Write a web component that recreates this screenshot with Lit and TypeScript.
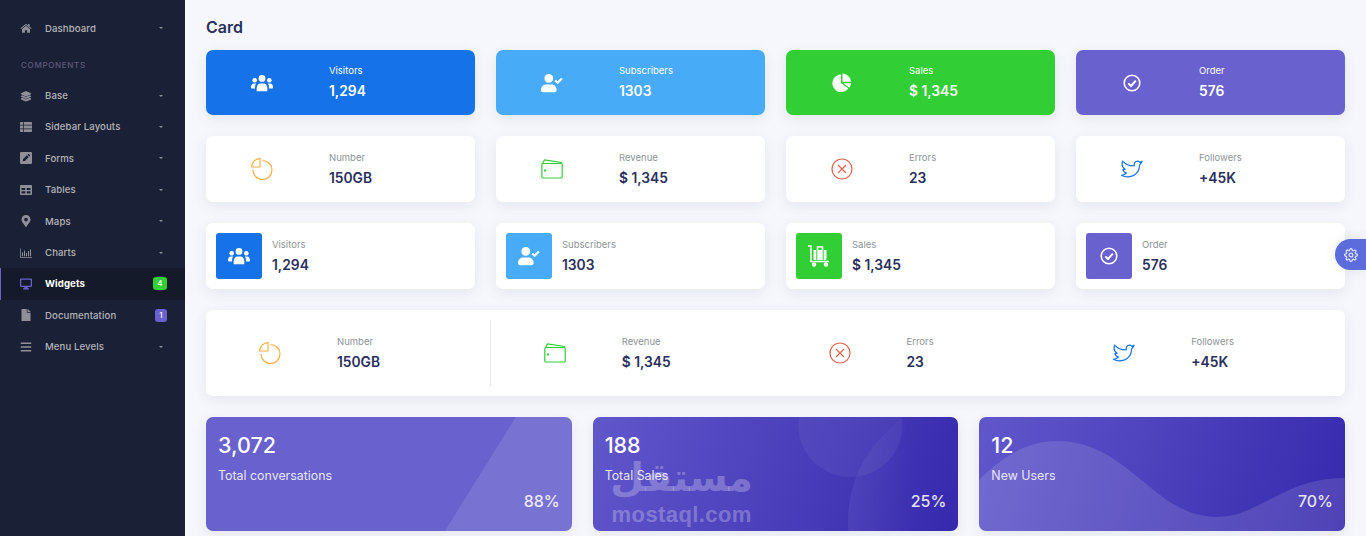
import { LitElement, html, css, svg } from "lit";
import { customElement } from "lit/decorators.js";

const P = {
  home: svg`<svg viewBox="0 0 24 20"><path d="M12 1.5 0.8 10.6l1.2 1.5L12 4l10 8.1 1.2-1.5-4-3.2V2.2h-3v2.8z"/><path d="M12 5.6 4 12.1V19.4h5.8v-5h4.4v5H20v-7.3z"/></svg>`,
  layers: svg`<svg viewBox="0 0 24 22"><path d="M12 1 2 5.6c-.8.4-.8 1.4 0 1.8L12 12l10-4.6c.8-.4.8-1.4 0-1.8z"/><path d="M4.8 9.5 2 10.8c-.8.4-.8 1.4 0 1.8l10 4.6 10-4.6c.8-.4.8-1.4 0-1.8l-2.8-1.3L12 12.8z"/><path d="M4.8 14.7 2 16c-.8.4-.8 1.4 0 1.8L12 22l10-4.2c.8-.4.8-1.4 0-1.8l-2.8-1.3L12 18z"/></svg>`,
  list: svg`<svg viewBox="0 0 24 20"><path d="M0 1.5C0 .7.7 0 1.5 0H6v5.6H0zM7.5 0h15c.8 0 1.5.7 1.5 1.5v4.1H7.5zM0 7.2h6v5.6H0zM7.5 7.2H24v5.6H7.5zM0 14.4h6V20H1.500C.7 20 0 19.300 0 18.500zM7.500 14.400H24v4.100c0 .8-.7 1.500-1.500 1.500h-15z"/></svg>`,
  pen: svg`<svg viewBox="0 0 20 20"><path fill-rule="evenodd" d="M2 0h16a2 2 0 0 1 2 2v16a2 2 0 0 1-2 2H2a2 2 0 0 1-2-2V2a2 2 0 0 1 2-2zm9.500 5.500-6.300 6.300L4.500 15.500l3.700-.7 6.300-6.300zm1-1 3 3 1-1a1 1 0 0 0 0-1.400l-1.600-1.600a1 1 0 0 0-1.400 0z"/></svg>`,
  table: svg`<svg viewBox="0 0 24 20"><path fill-rule="evenodd" d="M2 0h20a2 2 0 0 1 2 2v16a2 2 0 0 1-2 2H2a2 2 0 0 1-2-2V2a2 2 0 0 1 2-2zm1 6v4h7.500V6zm10.500 0v4H21V6zM3 12.500V17h7.500v-4.500zm10.500 0V17H21v-4.500z"/></svg>`,
  marker: svg`<svg viewBox="0 0 384 512"><path d="M172.268 501.67C26.97 291.031 0 269.413 0 192 0 85.961 85.961 0 192 0s192 85.961 192 192c0 77.413-26.97 99.031-172.268 309.67-9.535 13.774-29.93 13.773-39.464 0zM192 272c44.183 0 80-35.817 80-80s-35.817-80-80-80-80 35.817-80 80 35.817 80 80 80z"/></svg>`,
  chart: svg`<svg viewBox="0 0 24 20"><path d="M0 1h1.500v16.800H24V19.500H0z"/><path d="M4 9h2v7.500H4zM8 5h2v11.500H8zM12 10h2v6.500h-2zM16 6h2v10.500h-2zM20 3h2v13.500h-2z"/></svg>`,
  desktop: svg`<svg viewBox="0 0 24 22"><path fill-rule="evenodd" d="M2 0h20a2 2 0 0 1 2 2v13a2 2 0 0 1-2 2h-7l.6 2.500H18V22H6v-2.500h2.400L9 17H2a2 2 0 0 1-2-2V2a2 2 0 0 1 2-2zm.5 2.500v12h19v-12z"/></svg>`,
  file: svg`<svg viewBox="0 0 384 512"><path d="M224 136V0H24C10.700 0 0 10.700 0 24v464c0 13.300 10.700 24 24 24h336c13.300 0 24-10.700 24-24V160H248c-13.200 0-24-10.800-24-24zm160-14.100v6.100H256V0h6.100c6.400 0 12.500 2.500 17 7l97.900 98c4.500 4.500 7 10.600 7 16.900z"/></svg>`,
  bars: svg`<svg viewBox="0 0 448 512"><path d="M16 132h416c8.837 0 16-7.163 16-16V76c0-8.837-7.163-16-16-16H16C7.163 60 0 67.163 0 76v40c0 8.837 7.163 16 16 16zm0 160h416c8.837 0 16-7.163 16-16v-40c0-8.837-7.163-16-16-16H16c-8.837 0-16 7.163-16 16v40c0 8.837 7.163 16 16 16zm0 160h416c8.837 0 16-7.163 16-16v-40c0-8.837-7.163-16-16-16H16c-8.837 0-16 7.163-16 16v40c0 8.837 7.163 16 16 16z"/></svg>`,
  users: svg`<svg viewBox="0 0 24 18"><circle cx="12" cy="4" r="3.700"/><circle cx="4" cy="6" r="2.500"/><circle cx="20" cy="6" r="2.500"/><path d="M6.200 18v-3.500c0-3 2-5 4-5h3.600c2 0 4 2 4 5V18z"/><path d="M0 13.500c0-2.500 1.300-4 3-4h2.600a6 6 0 0 0-1.200 4V15H1a1 1 0 0 1-1-1zM24 13.500c0-2.500-1.300-4-3-4h-2.600a6 6 0 0 1 1.200 4V15H23a1 1 0 0 0 1-1z"/></svg>`,
  usercheck: svg`<svg viewBox="0 0 24 20"><circle cx="8.500" cy="5" r="4.800"/><path d="M0 17.500c0-3.600 2.500-6 5.500-6h6c3 0 5.500 2.400 5.500 6v.5a2 2 0 0 1-2 2H2a2 2 0 0 1-2-2z"/><path d="m14.700 8 1.600-1.600 1.800 1.800 3.900-3.900 1.600 1.600-5.500 5.500z"/></svg>`,
  pie: svg`<svg viewBox="0 0 22 22"><path d="M10 2.500A8.800 8.800 0 1 0 17.300 16.500L10 11z"/><path d="M11.500 1.500V9.700H20A8.800 8.800 0 0 0 11.500 1.500z"/><path d="M12.500 11.200H20.200A8.500 8.500 0 0 1 18.200 15.700z"/></svg>`,
  check: svg`<svg viewBox="0 0 22 22" fill="none" stroke="currentColor"><circle cx="11" cy="11" r="7.800" stroke-width="1.600"/><path d="m7.300 11.300 2.700 2.700 4.800-5.400" stroke-width="1.900"/></svg>`,
  pieo: svg`<svg viewBox="0 0 22 22" fill="none" stroke="currentColor" stroke-width="1.200"><path d="M11.500 2.500A9.500 9.500 0 1 1 2 12"/><path d="M9 .6V9H.6A8.400 8.400 0 0 1 9 .6z"/></svg>`,
  wallet: svg`<svg viewBox="0 0 22 20" fill="none" stroke="currentColor" stroke-width="1.200"><rect x=".8" y="4.500" width="20.400" height="14.500" rx="1"/><path d="M1.500 4.500 3.500 1 20.500 3.500v1"/><path d="M3 11.500h2" stroke-width="1.800"/></svg>`,
  xc: svg`<svg viewBox="0 0 22 22" fill="none" stroke="currentColor" stroke-width="1.200"><circle cx="11" cy="11" r="10"/><path d="m7 7 8 8M15 7l-8 8"/></svg>`,
  bird: svg`<svg viewBox="0 0 24 20" fill="none" stroke="currentColor" stroke-width="1.300" stroke-linejoin="round"><path d="M23 1.500c-.8.6-1.700 1-2.500 1.200a3.500 3.500 0 0 0-6.100 2.800v1C10.500 6.600 5 5 1.800 1.300c0 0-2.500 6 2.800 9-1.200.6-1.600.6-2.600.4.400 2 2 3.200 4 3.700-1.500 1.500-3.700 2.500-5.500 2.500 6 3.500 19.500 2 19.900-11.500.6-.7 2.100-2.400 2.600-3.900z"/></svg>`,
  cart: svg`<svg viewBox="0 0 22 22" fill="none" stroke="currentColor" stroke-width="1.500"><path d="M0 1h3v15.500h18"/><circle cx="6" cy="19.500" r="1.500" fill="currentColor"/><circle cx="18" cy="19.500" r="1.500" fill="currentColor"/><path fill="currentColor" stroke="none" d="M5.500 5h2.800v10H6.500a1 1 0 0 1-1-1zM18.500 5h-2.800v10h1.800a1 1 0 0 0 1-1zM9.300 5H14.700V15H9.300z"/><path d="M9.500 5V2h5v3"/></svg>`,
  gear: svg`<svg viewBox="0 0 24 24" fill="none" stroke="currentColor" stroke-width="2.100" stroke-linejoin="round"><circle cx="12" cy="12" r="3.300"/><path d="M19.400 15a1.700 1.700 0 0 0 .3 1.800l.1.100a2 2 0 1 1-2.900 2.900l-.1-.1a1.700 1.700 0 0 0-2.800 1.200V21a2 2 0 1 1-4 0v-.1a1.700 1.700 0 0 0-2.900-1.200l-.1.100a2 2 0 1 1-2.800-2.900l.1-.1a1.700 1.700 0 0 0-1.200-2.800H3a2 2 0 1 1 0-4h.1a1.700 1.700 0 0 0 1.200-2.900l-.1-.1a2 2 0 1 1 2.900-2.800l.1.100a1.700 1.700 0 0 0 1.800.3h.1A1.700 1.700 0 0 0 10 3.100V3a2 2 0 1 1 4 0v.1a1.700 1.700 0 0 0 2.900 1.200l.1-.1a2 2 0 1 1 2.800 2.900l-.1.100a1.700 1.700 0 0 0-.3 1.800v.1a1.700 1.700 0 0 0 1.500 1h.1a2 2 0 1 1 0 4H21a1.700 1.700 0 0 0-1.600 1z"/></svg>`,
};
type K = keyof typeof P;

const nav: { i: K; t: string; badge?: string; c?: string; active?: boolean }[] = [
  { i: "layers", t: "Base" },
  { i: "list", t: "Sidebar Layouts" },
  { i: "pen", t: "Forms" },
  { i: "table", t: "Tables" },
  { i: "marker", t: "Maps" },
  { i: "chart", t: "Charts" },
  { i: "desktop", t: "Widgets", badge: "4", c: "green", active: true },
  { i: "file", t: "Documentation", badge: "1", c: "purple" },
  { i: "bars", t: "Menu Levels" },
];
const row1: [K, string, string, string][] = [
  ["users", "Visitors", "1,294", "blue"],
  ["usercheck", "Subscribers", "1303", "sky"],
  ["pie", "Sales", "$ 1,345", "green"],
  ["check", "Order", "576", "purple"],
];
const row2: [K, string, string, string][] = [
  ["pieo", "Number", "150GB", "orange"],
  ["wallet", "Revenue", "$ 1,345", "lime"],
  ["xc", "Errors", "23", "red"],
  ["bird", "Followers", "+45K", "tw"],
];
const row3: [K, string, string, string][] = [
  ["users", "Visitors", "1,294", "blue"],
  ["usercheck", "Subscribers", "1303", "sky"],
  ["cart", "Sales", "$ 1,345", "green"],
  ["check", "Order", "576", "purple"],
];

@customElement("app-root")
export class AppRoot extends LitElement {
  static styles = css`
    :host { display: block; width: 1366px; height: 536px; overflow: hidden; position: relative;
      font-family: Inter, "Liberation Sans", sans-serif; background: #f5f7fd; color: #2a2f5b; }
    * { box-sizing: border-box; }
    .page { display: flex; height: 536px; }
    .side { width: 185px; flex: none; background: #1a2035; padding-top: 12.500px; color: #b4b5bb; }
    .item { display: flex; align-items: center; height: 31.400px; padding-left: 20px; padding-right: 18px; font-size: 9.600px; font-weight: 500; letter-spacing: .1px; }
    .item .ic { width: 12px; height: 12px; display: flex; align-items: center; justify-content: center; fill: #8f9097; color: #8f9097; flex: none; }
    .item .ic svg { width: 100%; height: 100%; max-height: 12px; }
    .item .t { margin-left: 13px; flex: 1; }
    .caret { width: 0; height: 0; border-left: 2px solid transparent; border-right: 2px solid transparent; border-top: 2px solid #8f9097; margin-right: 4px; }
    .item.active { background: #151a2b; border-left: 1px solid #6861ce; padding-left: 19px; color: #fff; font-weight: 700; }
    .item.active .ic { fill: #6861ce; color: #6861ce; }
    .badge { min-width: 12px; padding: 0 4px; height: 13px; border-radius: 3px; color: #fff; font-size: 8px; line-height: 13px; text-align: center; font-weight: 500; }
    .badge.green { background: #31ce36; min-width: 14px; }
    .badge.purple { background: #6861ce; }
    .sec { height: 30px; margin-top: 6px; display: flex; align-items: center; padding-left: 21px; font-size: 8px; letter-spacing: .7px; color: #5c5c78; font-weight: 500; }
    .main { flex: 1; padding: 18px 21px 0; min-width: 0; display: flex; flex-direction: column; }
    h1 { margin: 0; font-size: 16px; line-height: 19px; font-weight: 600; color: #2a2f5b; height: 32px; }
    .grid4 { display: grid; grid-template-columns: repeat(4, 1fr); gap: 21px; }
    .grid3 { display: grid; grid-template-columns: repeat(3, 1fr); gap: 21px; }
    .mb { margin-bottom: 21px; }
    .card { border-radius: 7px; background: #fff; box-shadow: 0 4px 14px rgba(69,65,78,.09); }
    .card.blue, .blue { background: #1572e8; } .card.sky, .sky { background: #48abf7; } .card.green, .green { background: #31ce36; } .card.purple, .purple { background: #6861ce; }
    .stat { display: grid; grid-template-columns: 112px 1fr; column-gap: 11px; align-items: center; height: 66px; }
    .top .stat { height: 65px; color: #fff; }
    .stat .ico { display: flex; justify-content: center; align-items: center; fill: currentColor; }
    .stat .ico svg { width: 22px; height: 22px; display: block; }
    .top .stat .ico { color: #fff; }
    .txt { padding-top: 1px; }
    .top .txt { padding-top: 0; }
    .lb { font-size: 9.500px; line-height: 12px; color: #8d9498; margin-bottom: 6px; }
    .top .lb { color: #fff; margin-bottom: 5.500px; }
    .val { font-size: 13.800px; line-height: 17px; font-weight: 600; color: #2a2f5b; }
    .top .val { color: #fff; }
    .c-orange { color: #ffad46; } .c-lime { color: #31ce36; } .c-red { color: #e0644d; } .c-tw { color: #1572e8; }
    .row3 .stat { display: flex; padding: 10px; height: 66px; gap: 10px; }
    .row3 .box { width: 46px; height: 46px; border-radius: 3px; display: flex; align-items: center; justify-content: center; color: #fff; fill: #fff; flex: none; }
    .row3 .box svg { width: 22px; height: 22px; }
    .wide { display: grid; grid-template-columns: repeat(4, 1fr); padding: 10px 0; height: 86px; }
    .wide .cell { padding-left: 8px; }
    .wide .cell:first-child { border-right: 1px solid #e4e6ee; }
    .big { position: relative; height: 114px; overflow: hidden; color: #fff; padding: 15px 12px 0 12px; border-radius: 7px; box-shadow: 0 4px 14px rgba(69,65,78,.09); }
    .big.g { background: linear-gradient(108deg, #6157cb, #3729ad); }
    .big.p { background: #6861ce; }
    .big svg.bg { position: absolute; inset: 0; width: 100%; height: 100%; }
    .big .num, .big .cap, .big .pct { position: relative; }
    .num { font-size: 21.500px; line-height: 26px; font-weight: 500; }
    .cap { font-size: 12.400px; line-height: 16px; margin-top: 10px; opacity: .85; }
    .pct { font-size: 16px; line-height: 19px; text-align: right; font-weight: 500; margin-top: 8px; opacity: .85; }
    .mark { position: absolute; left: 0; top: 36px; width: 178px; display: flex; flex-direction: column; align-items: center; color: rgba(255,255,255,.27); font-weight: 700; }
    .mark .ar { font-family: "DejaVu Sans", sans-serif; font-size: 39px; line-height: 50px; }
    .mark .en { font-family: "Liberation Sans", sans-serif; font-size: 22px; line-height: 24px; letter-spacing: .4px; }
    .cfg { position: absolute; right: 0; top: 239px; width: 31px; height: 31px; border-radius: 15.500px 0 0 15.500px; background: #5c6ddb; color: #dfe3fa; display: flex; align-items: center; justify-content: center; box-shadow: 0 0 12px rgba(69,65,78,.12); }
    .cfg svg { width: 14px; height: 14px; }
  `;

  private stat(s: [K, string, string, string]) {
    return html`<div class="stat">
      <div class="ico c-${s[3]}">${P[s[0]]}</div>
      <div class="txt"><div class="lb">${s[1]}</div><div class="val">${s[2]}</div></div>
    </div>`;
  }

  render() {
    return html`<div class="page">
      <aside class="side">
        <div class="item"><span class="ic">${P.home}</span><span class="t">Dashboard</span><span class="caret"></span></div>
        <div class="sec">COMPONENTS</div>
        ${nav.map((n) => html`<div class="item ${n.active ? "active" : ""}">
          <span class="ic">${P[n.i]}</span><span class="t">${n.t}</span>
          ${n.badge ? html`<span class="badge ${n.c}">${n.badge}</span>` : html`<span class="caret"></span>`}
        </div>`)}
      </aside>
      <main class="main">
        <h1>Card</h1>
        <div class="grid4 mb top">${row1.map((s) => html`<div class="card ${s[3]}">${this.stat(s)}</div>`)}</div>
        <div class="grid4 mb">${row2.map((s) => html`<div class="card">${this.stat(s)}</div>`)}</div>
        <div class="grid4 mb row3">${row3.map((s) => html`<div class="card"><div class="stat">
          <div class="box ${s[3]}">${P[s[0]]}</div>
          <div class="txt"><div class="lb">${s[1]}</div><div class="val">${s[2]}</div></div>
        </div></div>`)}</div>
        <div class="card wide mb">${row2.map((s) => html`<div class="cell">${this.stat(s)}</div>`)}</div>
        <div class="grid3">
          <div class="big p">
            <svg class="bg" viewBox="0 0 366 114" preserveAspectRatio="none"><path d="M310 0 239 114H366V0z" fill="#fff" fill-opacity=".11"/></svg>
            <div class="num">3,072</div><div class="cap">Total conversations</div><div class="pct">88%</div>
          </div>
          <div class="big g">
            <svg class="bg" viewBox="0 0 365 114" preserveAspectRatio="none">
              <defs><linearGradient id="lf" x1="0" x2="1" y1="0" y2="0"><stop offset="0" stop-color="#fff" stop-opacity=".06"/><stop offset=".6" stop-color="#fff" stop-opacity="0"/></linearGradient></defs>
              <circle cx="257" cy="8" r="52" fill="#fff" fill-opacity=".05"/>
              <path d="M310 0C268 32 252 72 255 114H365V0z" fill="url(#lf)"/>
            </svg>
            <div class="mark" aria-hidden="true"><span class="ar">مستقل</span><span class="en">mostaql.com</span></div>
            <div class="num">188</div><div class="cap">Total Sales</div><div class="pct">25%</div>
          </div>
          <div class="big g">
            <svg class="bg" viewBox="0 0 366 114" preserveAspectRatio="none"><path d="M0 63C25 38 50 24 78 24 150 24 175 100 238 100 280 100 305 61 366 61V114H0z" fill="#fff" fill-opacity=".12"/></svg>
            <div class="num">12</div><div class="cap">New Users</div><div class="pct">70%</div>
          </div>
        </div>
      </main>
    </div>
    <div class="cfg">${P.gear}</div>`;
  }
}
